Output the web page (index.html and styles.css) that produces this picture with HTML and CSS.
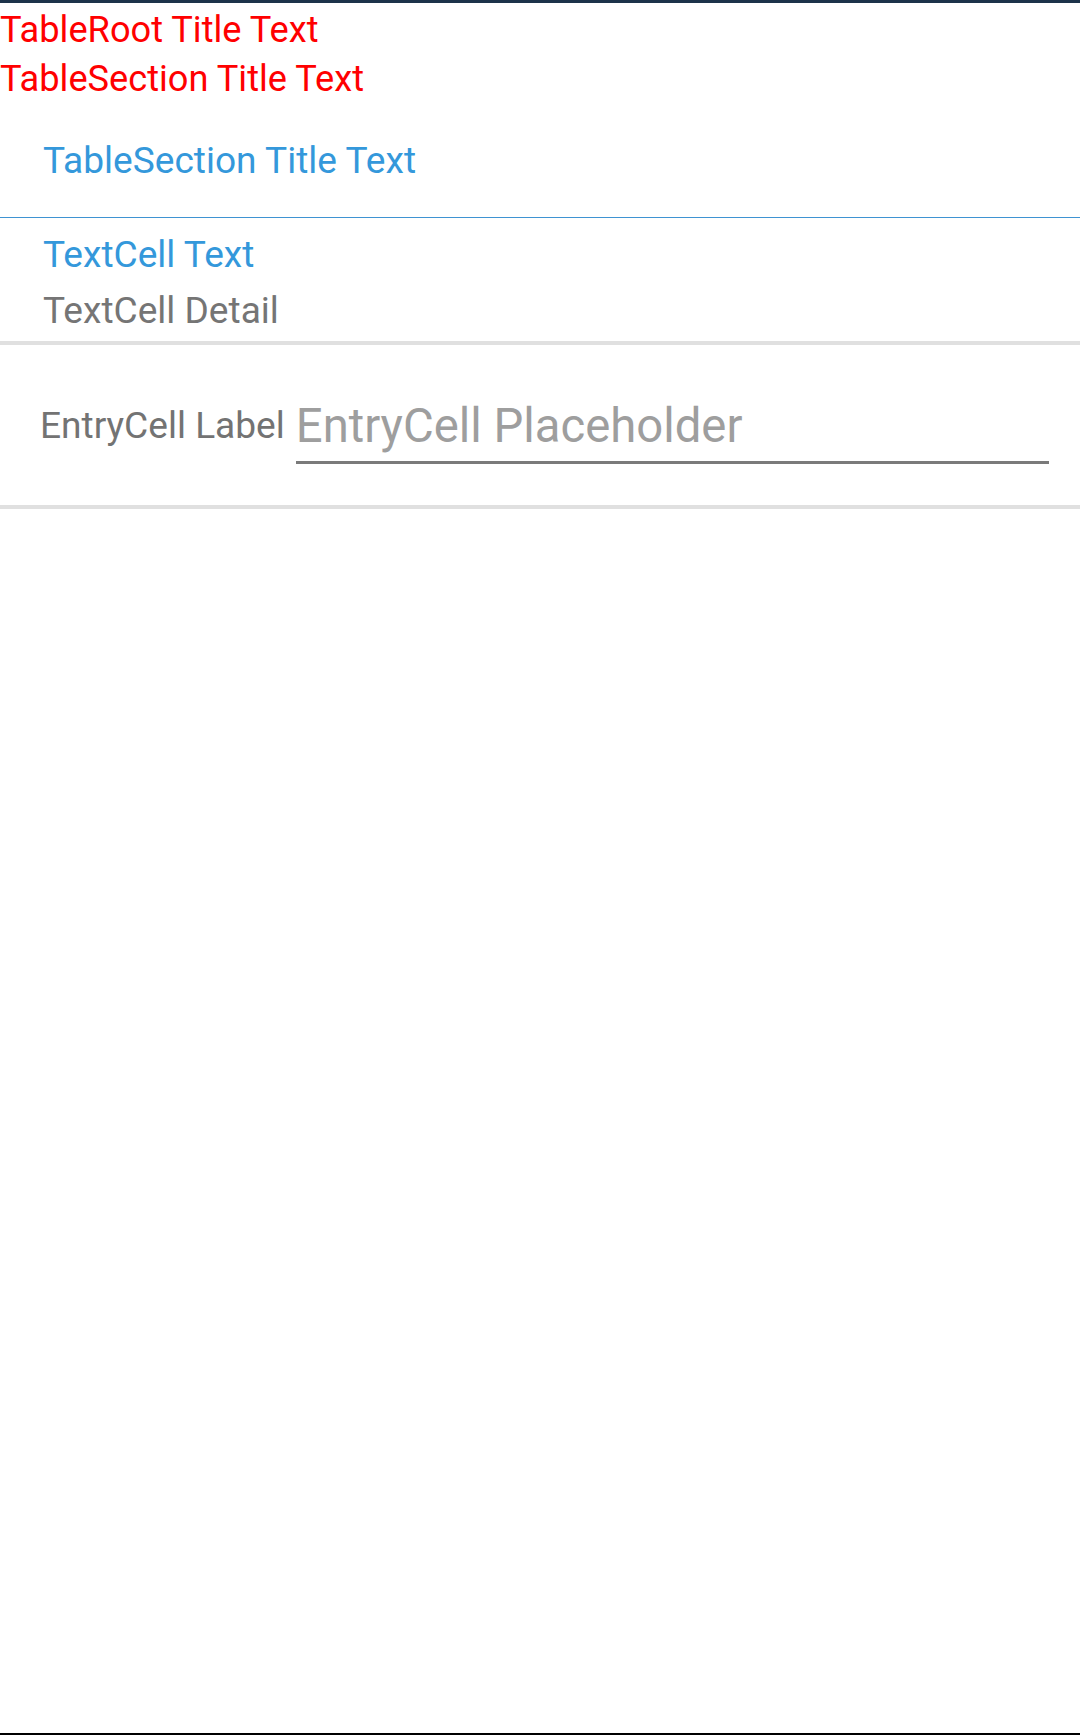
FILE: index.html
```html
<!DOCTYPE html>
<html lang="en">
<head>
<meta charset="utf-8">
<title>TableView</title>
<link rel="stylesheet" href="styles.css">
</head>
<body>
<div class="screen">
  <div class="statusbar"></div>
  <div class="table">
    <div class="root-title">TableRoot Title Text</div>
    <div class="root-title">TableSection Title Text</div>
    <div class="section-header">TableSection Title Text</div>
    <div class="text-cell">
      <div class="tc-text">TextCell Text</div>
      <div class="tc-detail">TextCell Detail</div>
    </div>
    <div class="entry-cell">
      <label class="entry-label" for="entry">EntryCell Label</label>
      <input class="entry-input" id="entry" type="text" placeholder="EntryCell Placeholder">
    </div>
  </div>
  <div class="navline"></div>
</div>
</body>
</html>
```
FILE: styles.css
```css
html, body {
  margin: 0;
  padding: 0;
  background: #ffffff;
}

body {
  font-family: Roboto, "Noto Sans", "Liberation Sans", sans-serif;
}

.screen {
  display: flex;
  flex-direction: column;
  min-height: 100vh;
}

.statusbar {
  height: 3px;
  background: #1d334a;
  flex: none;
}

.table {
  flex: 1;
  padding-top: 2px;
}

.root-title {
  color: #ff0000;
  font-size: 36.2px;
  line-height: 49px;
  white-space: nowrap;
}

.root-title + .root-title {
  margin-bottom: 2px;
}

.section-header {
  height: 110px;
  display: flex;
  align-items: center;
  padding-left: 43px;
  padding-bottom: 2px;
  color: #3498db;
  font-size: 37.1px;
  border-bottom: 1px solid #3f93d2;
}

.text-cell {
  padding: 15px 0 9px 43px;
  border-bottom: 4px solid #e0e0e0;
}

.tc-text {
  color: #3498db;
  font-size: 37.1px;
  line-height: 43px;
}

.tc-detail {
  margin-top: 13px;
  color: #757575;
  font-size: 37.1px;
  line-height: 43px;
}

.entry-cell {
  display: flex;
  align-items: flex-start;
  gap: 11px;
  padding: 53px 31px 41px 40px;
  border-bottom: 4px solid #e0e0e0;
}

.entry-label {
  margin-top: 5.6px;
  color: #737373;
  font-size: 37.1px;
  line-height: 43px;
  white-space: nowrap;
}

.entry-input {
  flex: 1;
  min-width: 0;
  box-sizing: content-box;
  height: 55px;
  margin: 0;
  padding: 0 0 8px 0;
  border: none;
  border-bottom: 3px solid #7a7a7a;
  outline: none;
  background: transparent;
  font-family: Roboto, "Noto Sans", "Liberation Sans", sans-serif;
  font-size: 47.25px;
  color: #212121;
}

.entry-input::placeholder {
  color: #9e9e9e;
  opacity: 1;
}

.navline {
  height: 2px;
  background: #000000;
  flex: none;
}
```
